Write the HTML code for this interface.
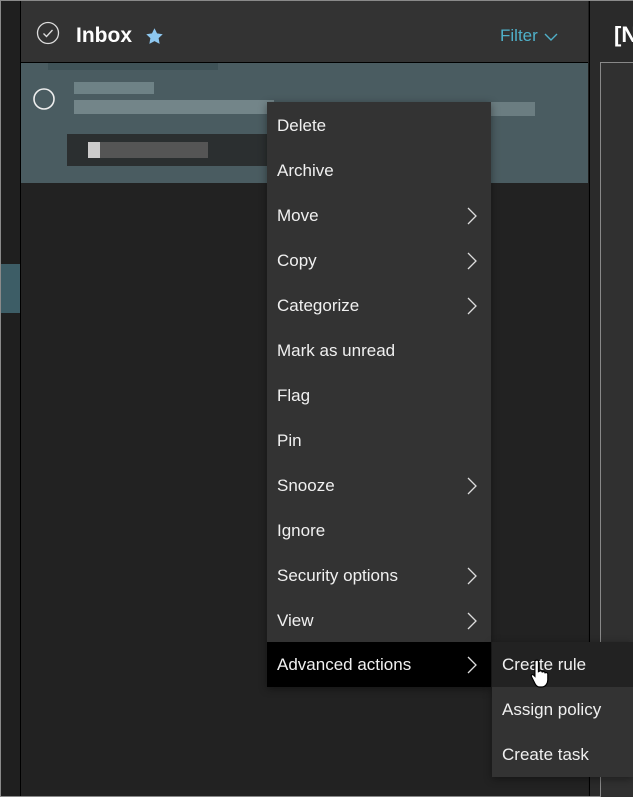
<!DOCTYPE html>
<html><head><meta charset="utf-8"><style>
*{margin:0;padding:0;box-sizing:border-box}
html,body{width:633px;height:797px;overflow:hidden;background:#1f1f1f;font-family:"Segoe UI","Liberation Sans",sans-serif}
.abs{position:absolute}
.item{position:absolute;left:0;width:224px;height:45px;color:#f0f0f0;font-size:17px;line-height:45px;padding-left:10px}
.chev{position:absolute;right:14px;top:14px}
</style></head><body>
<div class="abs" style="left:0;top:0;width:633px;height:797px;border:1px solid #8a8a8a;border-right:none"></div>
<div class="abs" style="left:1px;top:264px;width:19px;height:49px;background:#3d5d66"></div>
<div class="abs" style="left:20px;top:1px;width:1px;height:795px;background:#000"></div>
<div class="abs" style="left:21px;top:1px;width:567px;height:795px;background:#222"></div>
<div class="abs" style="left:21px;top:1px;width:567px;height:61px;background:#333"></div>
<div class="abs" style="left:21px;top:62px;width:567px;height:1px;background:#000"></div>
<svg class="abs" style="left:36px;top:21px" width="24" height="24"><circle cx="12" cy="12" r="10.5" fill="none" stroke="#ddd" stroke-width="1.3"/><path d="M7.5 12.5l3 3 6-6.5" fill="none" stroke="#ddd" stroke-width="1.3"/></svg>
<div class="abs" style="left:76px;top:24px;color:#fff;font-size:21px;font-weight:bold">Inbox</div>
<svg class="abs" style="left:145px;top:27px" width="19" height="19" viewBox="0 0 24 24"><path d="M12 1.5l3.2 6.6 7.2 1-5.2 5 1.3 7.2L12 17.9l-6.5 3.4 1.3-7.2-5.2-5 7.2-1z" fill="#8ec8f0"/></svg>
<div class="abs" style="left:500px;top:26px;color:#4fb0c9;font-size:17px">Filter</div>
<svg class="abs" style="left:544px;top:32px" width="14" height="10"><path d="M1 2l6 6 6-6" fill="none" stroke="#4fb0c9" stroke-width="1.4"/></svg>
<div class="abs" style="left:589px;top:1px;width:1px;height:795px;background:#000"></div>
<div class="abs" style="left:590px;top:1px;width:43px;height:795px;background:#2a2a2a"></div>
<div class="abs" style="left:600px;top:62px;width:33px;height:735px;border-left:1px solid #888;border-top:1px solid #888;background:#303030"></div>
<div class="abs" style="left:614px;top:22px;color:#fff;font-size:22px;font-weight:bold">[N</div>
<div class="abs" style="left:21px;top:63px;width:567px;height:120px;background:#4a5c61"></div>
<div class="abs" style="left:48px;top:63px;width:170px;height:7px;background:#3f5257"></div>
<svg class="abs" style="left:32px;top:87px" width="24" height="24"><circle cx="12" cy="12" r="10" fill="none" stroke="#eee" stroke-width="1.6"/></svg>
<div class="abs" style="left:74px;top:82px;width:80px;height:12px;background:#6e8286"></div>
<div class="abs" style="left:74px;top:100px;width:200px;height:14px;background:#738589"></div>
<div class="abs" style="left:490px;top:102px;width:45px;height:14px;background:#6b7d81"></div>
<div class="abs" style="left:67px;top:134px;width:200px;height:32px;background:#2b2f30"></div>
<div class="abs" style="left:88px;top:142px;width:120px;height:16px;background:#555"></div>
<div class="abs" style="left:88px;top:142px;width:12px;height:16px;background:#ccc"></div>
<div class="abs" style="left:267px;top:102px;width:224px;height:585px;background:#333;box-shadow:0 2px 8px rgba(0,0,0,.4)">
<div class="item" style="top:1px">Delete</div>
<div class="item" style="top:46px">Archive</div>
<div class="item" style="top:91px">Move<svg class="chev" width="10" height="18"><path d="M1 1l8 8-8 8" fill="none" stroke="#ddd" stroke-width="1.3"/></svg></div>
<div class="item" style="top:136px">Copy<svg class="chev" width="10" height="18"><path d="M1 1l8 8-8 8" fill="none" stroke="#ddd" stroke-width="1.3"/></svg></div>
<div class="item" style="top:181px">Categorize<svg class="chev" width="10" height="18"><path d="M1 1l8 8-8 8" fill="none" stroke="#ddd" stroke-width="1.3"/></svg></div>
<div class="item" style="top:226px">Mark as unread</div>
<div class="item" style="top:271px">Flag</div>
<div class="item" style="top:316px">Pin</div>
<div class="item" style="top:361px">Snooze<svg class="chev" width="10" height="18"><path d="M1 1l8 8-8 8" fill="none" stroke="#ddd" stroke-width="1.3"/></svg></div>
<div class="item" style="top:406px">Ignore</div>
<div class="item" style="top:451px">Security options<svg class="chev" width="10" height="18"><path d="M1 1l8 8-8 8" fill="none" stroke="#ddd" stroke-width="1.3"/></svg></div>
<div class="item" style="top:496px">View<svg class="chev" width="10" height="18"><path d="M1 1l8 8-8 8" fill="none" stroke="#ddd" stroke-width="1.3"/></svg></div>
<div class="item" style="top:540px;background:#000">Advanced actions<svg class="chev" width="10" height="18"><path d="M1 1l8 8-8 8" fill="none" stroke="#ddd" stroke-width="1.3"/></svg></div>
</div>
<div class="abs" style="left:492px;top:642px;width:141px;height:135px;background:#333;box-shadow:0 2px 8px rgba(0,0,0,.4)">
<div class="item" style="top:0;width:141px;background:#222">Create rule</div>
<div class="item" style="top:45px;width:141px">Assign policy</div>
<div class="item" style="top:90px;width:141px">Create task</div>
</div>
<svg class="abs" style="left:529px;top:658px" width="26" height="32" viewBox="0 0 22 26"><path d="M5 2c1-1 2.5-1 3 0v9l1-.5c1-.5 2 0 2.2.8 1-.6 2.2-.2 2.4.7 1-.5 2.2 0 2.3 1V18c0 3-2 6-5 6H9c-2 0-3-1-4-3l-3-6c-.5-1 .8-2 1.8-1.2L5 15z" fill="#fff" stroke="#000" stroke-width="1"/></svg>
</body></html>
